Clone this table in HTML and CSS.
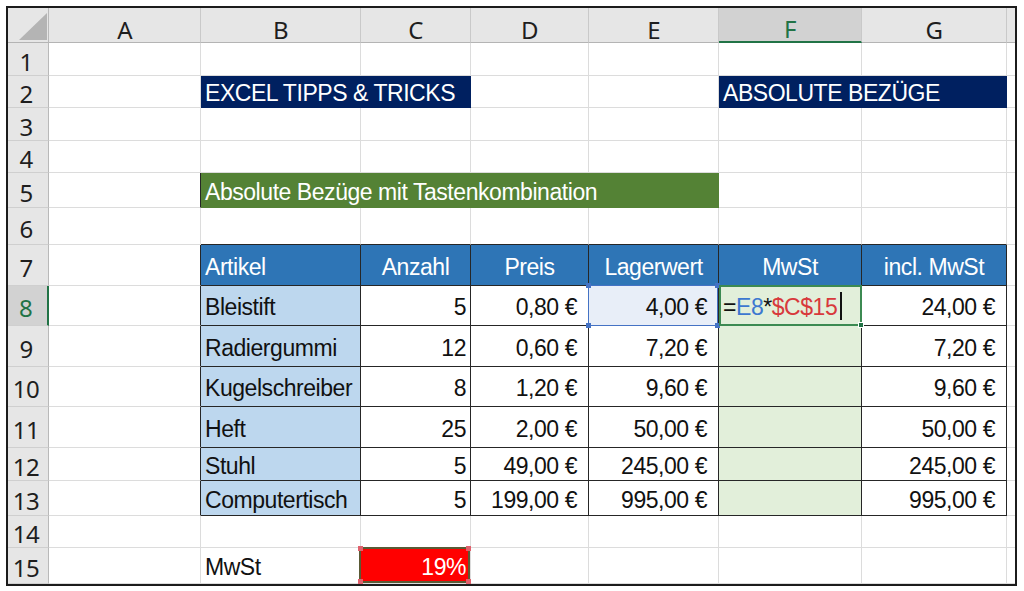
FILE: index.html
```html
<!DOCTYPE html>
<html lang="de">
<head>
<meta charset="utf-8">
<title>Absolute Bezüge</title>
<link rel="stylesheet" href="styles.css">
</head>
<body>
<div class="sheet">
  <!-- column headers -->
  <div class="corner"><svg width="41" height="35" viewBox="0 0 41 35"><polygon points="11,32 39,5 39,32" fill="#b4b4b4"/></svg></div>
  <div class="ch">A</div>
  <div class="ch">B</div>
  <div class="ch">C</div>
  <div class="ch">D</div>
  <div class="ch">E</div>
  <div class="ch sel">F</div>
  <div class="ch">G</div>
  <div class="ch strip"></div>

  <!-- row 1 -->
  <div class="rh">1</div>
  <div class="c"></div><div class="c"></div><div class="c"></div><div class="c"></div><div class="c"></div><div class="c"></div><div class="c"></div><div class="c x"></div>

  <!-- row 2 -->
  <div class="rh">2</div>
  <div class="c"></div>
  <div class="c navy span2">EXCEL TIPPS &amp; TRICKS</div>
  <div class="c"></div><div class="c"></div>
  <div class="c navy span2">ABSOLUTE BEZÜGE</div>
  <div class="c x"></div>

  <!-- row 3 -->
  <div class="rh">3</div>
  <div class="c"></div><div class="c"></div><div class="c"></div><div class="c"></div><div class="c"></div><div class="c"></div><div class="c"></div><div class="c x"></div>

  <!-- row 4 -->
  <div class="rh">4</div>
  <div class="c"></div><div class="c"></div><div class="c"></div><div class="c"></div><div class="c"></div><div class="c"></div><div class="c"></div><div class="c x"></div>

  <!-- row 5 -->
  <div class="rh">5</div>
  <div class="c dr"></div>
  <div class="c green span4">Absolute Bezüge mit Tastenkombination</div>
  <div class="c"></div><div class="c"></div>
  <div class="c x"></div>

  <!-- row 6 -->
  <div class="rh">6</div>
  <div class="c"></div>
  <div class="c db"></div><div class="c db"></div><div class="c db"></div><div class="c db"></div><div class="c db"></div><div class="c db"></div>
  <div class="c x"></div>

  <!-- row 7 -->
  <div class="rh">7</div>
  <div class="c dr"></div>
  <div class="c t th">Artikel</div>
  <div class="c t th ctr">Anzahl</div>
  <div class="c t th ctr">Preis</div>
  <div class="c t th ctr">Lagerwert</div>
  <div class="c t th ctr">MwSt</div>
  <div class="c t th ctr">incl. MwSt</div>
  <div class="c x"></div>

  <!-- row 8 -->
  <div class="rh sel">8</div>
  <div class="c dr"></div>
  <div class="c t lb">Bleistift</div>
  <div class="c t r">5</div>
  <div class="c t r cur">0,80&nbsp;€</div>
  <div class="c t r cur ref">4,00&nbsp;€<span class="ref-box"><i class="h tl"></i><i class="h tr"></i><i class="h bl"></i><i class="h br"></i></span></div>
  <div class="c t lg active"><span class="fx">=<span class="fx-b">E8</span>*<span class="fx-r">$C$15</span></span><span class="caret"></span><span class="act-box"><i class="fill"></i></span></div>
  <div class="c t r cur">24,00&nbsp;€</div>
  <div class="c x"></div>

  <!-- row 9 -->
  <div class="rh">9</div>
  <div class="c dr"></div>
  <div class="c t lb">Radiergummi</div>
  <div class="c t r">12</div>
  <div class="c t r cur">0,60&nbsp;€</div>
  <div class="c t r cur">7,20&nbsp;€</div>
  <div class="c t lg"></div>
  <div class="c t r cur">7,20&nbsp;€</div>
  <div class="c x"></div>

  <!-- row 10 -->
  <div class="rh">10</div>
  <div class="c dr"></div>
  <div class="c t lb">Kugelschreiber</div>
  <div class="c t r">8</div>
  <div class="c t r cur">1,20&nbsp;€</div>
  <div class="c t r cur">9,60&nbsp;€</div>
  <div class="c t lg"></div>
  <div class="c t r cur">9,60&nbsp;€</div>
  <div class="c x"></div>

  <!-- row 11 -->
  <div class="rh">11</div>
  <div class="c dr"></div>
  <div class="c t lb">Heft</div>
  <div class="c t r">25</div>
  <div class="c t r cur">2,00&nbsp;€</div>
  <div class="c t r cur">50,00&nbsp;€</div>
  <div class="c t lg"></div>
  <div class="c t r cur">50,00&nbsp;€</div>
  <div class="c x"></div>

  <!-- row 12 -->
  <div class="rh">12</div>
  <div class="c dr"></div>
  <div class="c t lb">Stuhl</div>
  <div class="c t r">5</div>
  <div class="c t r cur">49,00&nbsp;€</div>
  <div class="c t r cur">245,00&nbsp;€</div>
  <div class="c t lg"></div>
  <div class="c t r cur">245,00&nbsp;€</div>
  <div class="c x"></div>

  <!-- row 13 -->
  <div class="rh">13</div>
  <div class="c dr"></div>
  <div class="c t lb">Computertisch</div>
  <div class="c t r">5</div>
  <div class="c t r cur">199,00&nbsp;€</div>
  <div class="c t r cur">995,00&nbsp;€</div>
  <div class="c t lg"></div>
  <div class="c t r cur">995,00&nbsp;€</div>
  <div class="c x"></div>

  <!-- row 14 -->
  <div class="rh">14</div>
  <div class="c"></div><div class="c"></div><div class="c"></div><div class="c"></div><div class="c"></div><div class="c"></div><div class="c"></div><div class="c x"></div>

  <!-- row 15 -->
  <div class="rh">15</div>
  <div class="c"></div>
  <div class="c">MwSt</div>
  <div class="c r red copy">19%<span class="ants"><i class="h tl"></i><i class="h tr"></i><i class="h bl"></i><i class="h br"></i></span></div>
  <div class="c"></div><div class="c"></div><div class="c"></div><div class="c"></div>
  <div class="c x"></div>
</div>
</body>
</html>
```

FILE: styles.css
```css
* { box-sizing: border-box; }

html, body {
  margin: 0;
  padding: 0;
  background: #ffffff;
}

.sheet {
  margin: 6px;
  width: 1011px;
  border: 2px solid #1c1c1c;
  display: grid;
  grid-template-columns: 41px 152px 160px 110px 118px 130px 143px 145px 8px;
  grid-template-rows: 35px 33px 32px 33px 32px 35px 37px 41px 40px 41px 40px 41px 33px 35px 32px 36px;
  font-family: "Liberation Sans", Arial, sans-serif;
  font-size: 23px;
  letter-spacing: -0.45px;
  color: #111111;
  overflow: hidden;
}

/* headers */
.corner {
  background: #e6e6e6;
  border-right: 1px solid #b9b9b9;
  border-bottom: 1px solid #b4b4b4;
}
.corner svg { display: block; }

.ch,
.rh {
  background: #e6e6e6;
  font-family: "Noto Sans", "Open Sans", sans-serif;
  font-size: 24px;
  letter-spacing: -0.6px;
  color: #1e1e1e;
  display: flex;
  justify-content: center;
  align-items: center;
  line-height: 1;
}
.ch {
  border-right: 1px solid #c9c9c9;
  border-bottom: 1px solid #b4b4b4;
  padding-top: 10px;
}
.ch.strip { border-right: none; }
.ch.sel {
  background: #d2d2d2;
  color: #217346;
  border-bottom: 2px solid #217346;
  padding-top: 9px;
}
.rh {
  border-right: 1px solid #b9b9b9;
  border-bottom: 1px solid #cfcfcf;
  padding-top: 5px;
  padding-right: 4px;
}
.rh.sel {
  background: #d2d2d2;
  color: #217346;
  border-right: 2px solid #217346;
}

/* cells */
.c {
  border-right: 1px solid #dcdcdc;
  border-bottom: 1px solid #dcdcdc;
  display: flex;
  align-items: center;
  padding: 4px 4px 0 4px;
  white-space: nowrap;
  min-width: 0;
}
.c.x { border-right: none; }
.r { justify-content: flex-end; padding-right: 4px; }
.cur { padding-right: 11px; }
.ctr { justify-content: center; }

.span2 { grid-column: span 2; }
.span4 { grid-column: span 4; }

.navy {
  background: #002060;
  color: #ffffff;
  border-right-color: #002060;
  border-bottom-color: #002060;
}
.green {
  background: #548235;
  color: #ffffff;
  border-right-color: #548235;
  border-bottom-color: #548235;
}
.dr { border-right-color: #262626; }
.db { border-bottom-color: #262626; }

/* table */
.t {
  border-right-color: #262626;
  border-bottom-color: #262626;
}
.th {
  background: #2e75b6;
  color: #ffffff;
}
.lb { background: #bdd7ee; }
.lg { background: #e2efda; }

/* reference (E8) */
.ref {
  position: relative;
  background: #e8eef8;
}
.ref-box {
  position: absolute;
  left: -1px;
  top: -1px;
  right: 0;
  bottom: -1px;
  border: 1px solid #4472c4;
}
.h {
  position: absolute;
  width: 5px;
  height: 5px;
  background: #4472c4;
}
.h.tl { left: -3px; top: -3px; }
.h.tr { right: -3px; top: -3px; }
.h.bl { left: -3px; bottom: -3px; }
.h.br { right: -3px; bottom: -3px; }

/* active cell (F8) */
.active { position: relative; }
.fx-b { color: #3d78d0; }
.fx-r { color: #d8393c; }
.caret {
  display: inline-block;
  width: 2px;
  height: 28px;
  margin-left: 3px;
  margin-top: -3px;
  background: #111111;
}
.act-box {
  position: absolute;
  left: 0;
  top: -1px;
  right: -1px;
  bottom: -1px;
  border: 2px solid #3c8a52;
}
.fill {
  position: absolute;
  right: -4px;
  bottom: -4px;
  width: 6px;
  height: 6px;
  background: #217346;
  border: 1px solid #ffffff;
}

/* copied cell (C15) */
.red {
  background: #ff0000;
  color: #ffffff;
  position: relative;
}
.ants {
  position: absolute;
  left: -2px;
  top: -1px;
  right: 0;
  bottom: 0;
  border: 2px dashed #e07a7a;
  outline: 2px solid #5a5a35;
  outline-offset: -2px;
}
.ants .h { background: #e0606c; width: 5px; height: 5px; }
```
